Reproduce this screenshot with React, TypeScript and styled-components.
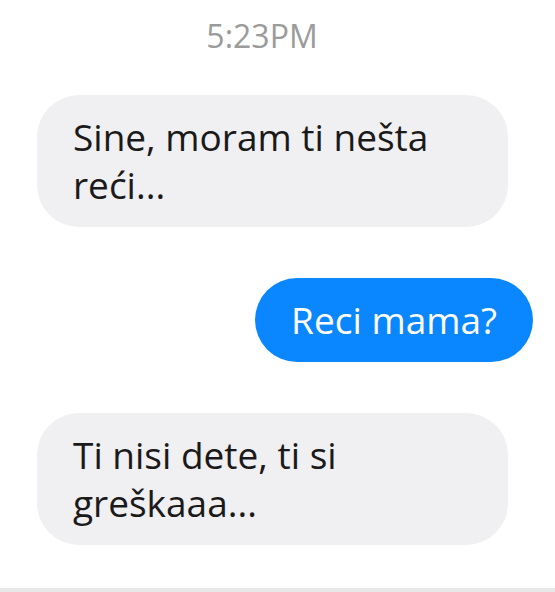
import React from "react";
import styled, { createGlobalStyle } from "styled-components";

const Global = createGlobalStyle`
  html, body { margin: 0; padding: 0; background: #ffffff; }
  body { font-family: "Open Sans", "Noto Sans", sans-serif; }
`;

const Screen = styled.div`
  width: 555px;
  height: 592px;
  display: flex;
  flex-direction: column;
  background: #ffffff;
  overflow: hidden;
`;

const Thread = styled.div`
  flex: 1;
  min-height: 0;
  display: flex;
  flex-direction: column;
  gap: 51px;
  padding: 17px 22px 0 37px;
`;

const Timestamp = styled.div`
  text-align: center;
  color: #9b9b9b;
  font-size: 32px;
  line-height: 38px;
  margin: 0 46px -11px 0;
`;

const Row = styled.div<{ $out?: boolean }>`
  display: flex;
  justify-content: ${(p) => (p.$out ? "flex-end" : "flex-start")};
`;

const Bubble = styled.div<{ $out?: boolean }>`
  box-sizing: border-box;
  width: ${(p) => (p.$out ? "auto" : "471px")};
  padding: 18px 36px;
  border-radius: 42px;
  background: ${(p) => (p.$out ? "#0a86ff" : "#f0eff1")};
  color: ${(p) => (p.$out ? "#ffffff" : "#1a1a1a")};
  font-size: 37px;
  line-height: 48px;
`;

const Footer = styled.div`
  height: 4px;
  background: #e8e8e8;
`;

export default function App() {
  return (
    <>
      <Global />
      <Screen>
        <Thread>
          <Timestamp>5:23PM</Timestamp>
          <Row>
            <Bubble>Sine, moram ti nešta reći...</Bubble>
          </Row>
          <Row $out>
            <Bubble $out>Reci mama?</Bubble>
          </Row>
          <Row>
            <Bubble>Ti nisi dete, ti si greškaaa...</Bubble>
          </Row>
        </Thread>
        <Footer />
      </Screen>
    </>
  );
}
